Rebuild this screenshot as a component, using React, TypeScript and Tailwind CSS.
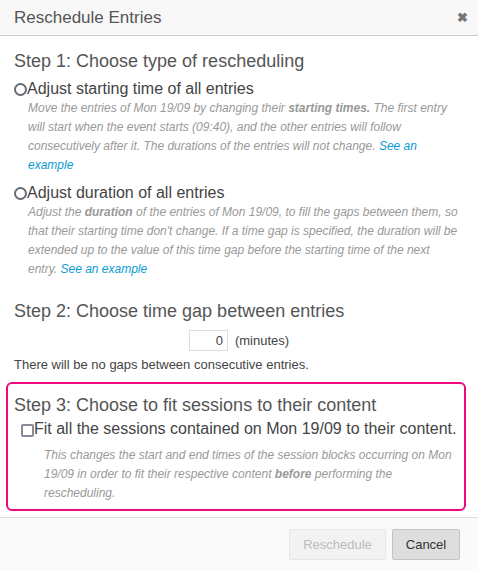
import React from "react";

function Radio() {
  return (
    <span className="mt-[1px] inline-block h-[13px] w-[13px] shrink-0 rounded-full border-2 border-[#666a75] bg-white" />
  );
}

function Link({ children }: { children: React.ReactNode }) {
  return <span className="text-[#0a9bd4]">{children}</span>;
}

export default function App() {
  return (
    <div
      className="flex h-[571px] w-[478px] flex-col bg-white text-[#444]"
      style={{ fontFamily: '"Liberation Sans", Arial, sans-serif' }}
    >
      <div className="flex h-[36px] items-center justify-between border-b border-[#ccc] bg-[#f8f8f8] pl-[14px] pr-[10px]">
        <span className="text-[17px] text-[#555]">Reschedule Entries</span>
        <span className="text-[13px] font-bold text-[#777]">✖</span>
      </div>

      <div className="flex-1 px-[14px] pt-[14px]">
        <h2 className="text-[18px] leading-[22px] text-[#555]">Step 1: Choose type of rescheduling</h2>

        <div className="mt-[7px]">
          <label className="flex items-center text-[16px] leading-[19px]">
            <Radio />
            Adjust starting time of all entries
          </label>
          <p className="mt-[1px] pl-[14px] pr-[5px] text-[12px] italic leading-[19px] text-[#999]">
            Move the entries of Mon 19/09 by changing their <b>starting times.</b> The first entry
            will start when the event starts (09:40), and the other entries will follow
            consecutively after it. The durations of the entries will not change.{" "}
            <Link>See an example</Link>
          </p>
        </div>

        <div className="mt-[8px]">
          <label className="flex items-center text-[16px] leading-[19px]">
            <Radio />
            Adjust duration of all entries
          </label>
          <p className="mt-[1px] pl-[14px] pr-[5px] text-[12px] italic leading-[19px] text-[#999]">
            Adjust the <b>duration</b> of the entries of Mon 19/09, to fill the gaps between them, so
            that their starting time don't change. If a time gap is specified, the duration will be
            extended up to the value of this time gap before the starting time of the next
            entry. <Link>See an example</Link>
          </p>
        </div>

        <h2 className="mt-[21px] text-[18px] leading-[22px] text-[#555]">
          Step 2: Choose time gap between entries
        </h2>
        <div className="mt-[8px] flex items-center justify-center gap-[7px] text-[13px]">
          <span className="flex h-[21px] w-[39px] items-center justify-end border border-[#ddd] pr-[4px]">
            0
          </span>
          <span>(minutes)</span>
        </div>
        <p className="mt-[6px] text-[13px] leading-[16px]">There will be no gaps between consecutive entries.</p>
      </div>

      <div className="mx-[6px] mb-[6px] mr-[12px] rounded-[6px] border-2 border-[#f0077f] px-[6px] pb-[6px] pt-[10px]">
        <h2 className="text-[18px] leading-[22px] text-[#555]">Step 3: Choose to fit sessions to their content</h2>
        <label className="mt-[3px] flex items-center pl-[7px] text-[16px] leading-[19px]">
          <span className="mt-[3px] inline-block h-[13px] w-[13px] shrink-0 rounded-[2px] border-2 border-[#8a8a99] bg-white" />
          Fit all the sessions contained on Mon 19/09 to their content.
        </label>
        <p className="mt-[8px] pl-[30px] text-[12px] italic leading-[19px] text-[#999]">
          This changes the start and end times of the session blocks occurring on Mon 19/09 in order to
          fit their respective content <b>before</b> performing the rescheduling.
        </p>
      </div>

      <div className="flex h-[54px] items-center justify-end gap-[6px] border-t border-[#ddd] bg-[#fafafa] pr-[18px]">
        <button className="h-[31px] w-[97px] rounded-[2px] border border-[#e6e6e6] bg-[#f2f2f2] text-[13px] text-[#bbb]">
          Reschedule
        </button>
        <button className="h-[31px] w-[68px] rounded-[2px] border border-[#c4c4c4] bg-[#dedede] text-[13px] text-[#333]">
          Cancel
        </button>
      </div>
    </div>
  );
}
